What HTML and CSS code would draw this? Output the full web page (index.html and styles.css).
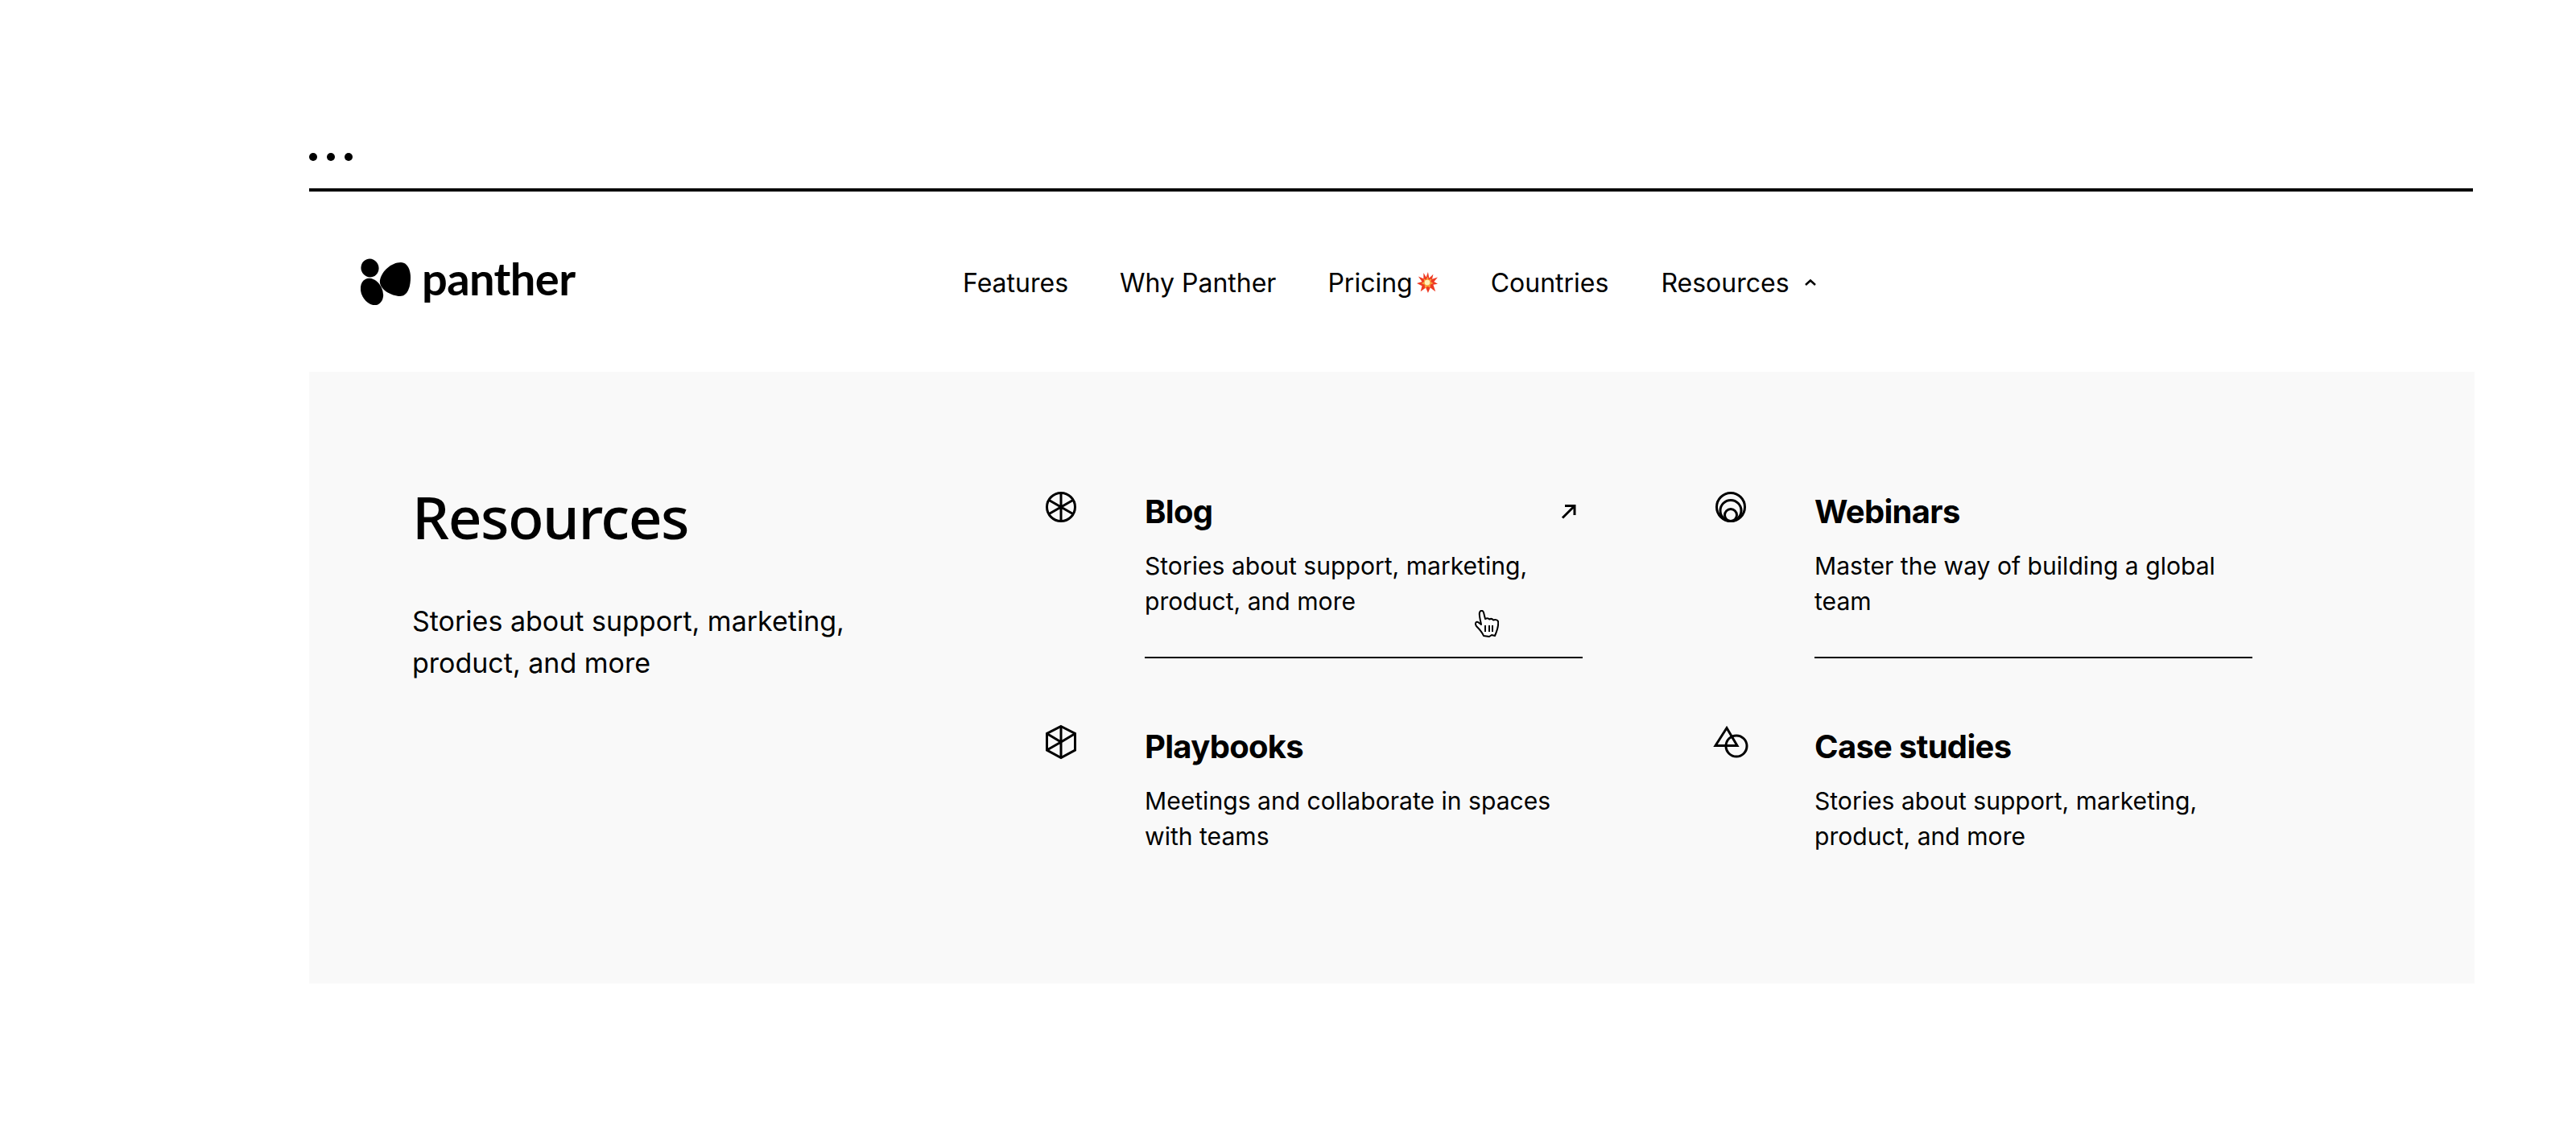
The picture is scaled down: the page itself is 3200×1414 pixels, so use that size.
FILE: index.html
```html
<!DOCTYPE html>
<html lang="en">
<head>
    <meta charset="utf-8">
    <title>Panther - Resources menu</title>
    <link rel="stylesheet" href="styles.css">
</head>
<body>

    <div class="frame">
        <div class="dots"><span></span><span></span><span></span></div>

        <header class="navbar">
            <a class="logo" href="#">
                <svg class="logo-mark" viewBox="0 0 64 58" width="64" height="58">
                    <ellipse cx="11.500" cy="12" rx="11" ry="11.500" transform="rotate(-20 11.500 12)"/>
                    <ellipse cx="14" cy="41.500" rx="13" ry="17.500" transform="rotate(-28 14 41.500)"/>
                    <path d="M24 27C26 16 38 5 50 5C58 5 62 14 62 24C62 36 58 47 49 47C38 47 22 38 24 27Z"/>
                </svg>
                <span class="logo-text">panther</span>
            </a>
            <nav class="nav">
                <a href="#">Features</a>
                <a href="#">Why Panther</a>
                <a href="#" class="nav-pricing">Pricing
                    <svg viewBox="0 0 28 28" width="26" height="26">
                        <polygon fill="#ee3a22" points="15,0 16.500,8 22,3 20.500,9.500 28,7 23,13 28,16 22,17 25,26 18,21 15,28 12,21 5,26 7,18.500 0,15 7,13 2,6 9,9 9,1 12.500,7"/>
                        <polygon fill="#f9a03a" points="14.500,6 16,10.500 20,9 18.500,13 22,15 18,17 18,21 14.500,19 11,22 10.500,17 6,15 10,13 9,9 12.500,10.500"/>
                        <circle cx="14" cy="14" r="3.500" fill="#fff2b8"/>
                    </svg>
                </a>
                <a href="#">Countries</a>
                <a href="#" class="nav-open">Resources
                    <svg viewBox="0 0 16 10" width="16" height="10"><path d="M2 8L8 2.500L14 8" fill="none" stroke="#000" stroke-width="2.500"/></svg>
                </a>
            </nav>
        </header>

        <section class="panel">
            <div class="intro">
                <h1>Resources</h1>
                <p>Stories about support, marketing, product, and more</p>
            </div>

            <div class="cards">
                <a class="card card-line" href="#">
                    <svg class="icon" viewBox="0 0 40 44">
                        <circle cx="20" cy="20" r="17.500"/>
                        <path d="M20 2.500V37.500M4.800 11.200L35.200 28.800M4.800 28.800L35.200 11.200"/>
                    </svg>
                    <div class="card-body">
                        <h3>Blog</h3>
                        <p>Stories about support, marketing, product, and more</p>
                        <svg class="arrow" viewBox="0 0 20 20"><path d="M3 17.500L18 2.500M6 2.500H18V14"/></svg>
                        <svg class="cursor" viewBox="0 0 30 34" width="30" height="34">
                            <path fill="#fff" stroke="#000" stroke-width="2" stroke-linejoin="round" d="M6 3C7 0 10 0 11 3L13 11C15 10 17 10 18 11.500C20 10.500 22 11 23 12.500C25 11.500 28 12 29 14C30 20 28 25 25 32L21 31L18 33L11 32C9 27 5 23 2 20C0 17 1 14 4 15L8 18C7 12 5 7 6 3Z"/>
                            <path fill="none" stroke="#000" stroke-width="2" d="M13 19V27M18 19V27M22 19V27"/>
                        </svg>
                    </div>
                </a>
                <a class="card card-line" href="#">
                    <svg class="icon" viewBox="0 0 40 44">
                        <circle cx="20" cy="20" r="17.500"/>
                        <circle cx="20" cy="24.500" r="13"/>
                        <circle cx="20" cy="30" r="7.500"/>
                    </svg>
                    <div class="card-body">
                        <h3>Webinars</h3>
                        <p>Master the way of building a global team</p>
                    </div>
                </a>
                <a class="card" href="#">
                    <svg class="icon" viewBox="0 0 40 44">
                        <path d="M20 0.500L37.500 9.500V30L20 39.500L2.500 30V9.500Z"/>
                        <path d="M20 0.500V39.500M2.500 9.500L20 20L37.500 9.500M2.500 30L20 20"/>
                    </svg>
                    <div class="card-body">
                        <h3>Playbooks</h3>
                        <p>Meetings and collaborate in spaces with teams</p>
                    </div>
                </a>
                <a class="card" href="#">
                    <svg class="icon" viewBox="0 0 40 44">
                        <path d="M15 2.500L28 24.500H1Z"/>
                        <circle cx="27" cy="25" r="13"/>
                    </svg>
                    <div class="card-body">
                        <h3>Case studies</h3>
                        <p>Stories about support, marketing, product, and more</p>
                    </div>
                </a>
            </div>
        </section>
    </div>

</body>
</html>
```

FILE: styles.css
```css
* {
    margin: 0;
    padding: 0;
    box-sizing: border-box;
}

body {
    font-family: 'Inter', sans-serif;
    background-color: #ffffff;
    color: #000;
}

a {
    color: inherit;
    text-decoration: none;
}

.frame {
    width: 2690px;
    margin-left: 384px;
    padding-top: 190px;
}

.dots {
    display: flex;
    gap: 12px;
    padding-bottom: 34px;
    margin-right: 2px;
    border-bottom: 4px solid #000;
}

.dots span {
    width: 10px;
    height: 10px;
    border-radius: 50%;
    background: #000;
}

.navbar {
    height: 224px;
    display: flex;
    align-items: center;
    padding-left: 64px;
}

.logo {
    display: flex;
    align-items: center;
    gap: 12px;
    width: 267px;
}

.logo-text {
    font-family: 'Lato', sans-serif;
    font-size: 56px;
    font-weight: 700;
    letter-spacing: -0.6px;
    line-height: 58px;
    padding-bottom: 8px;
}

.nav {
    display: flex;
    align-items: center;
    gap: 64px;
    margin-left: 481px;
    padding-top: 2px;
    font-size: 32px;
}

.nav a {
    display: flex;
    align-items: center;
}

.nav-pricing {
    gap: 5px;
    padding-right: 2px;
}

.nav-open {
    gap: 18px;
    margin-left: 1px;
}

.panel {
    height: 760px;
    background-color: #f9f9f9;
    display: flex;
    padding: 150px 0 0 128px;
}

.intro {
    width: 786px;
}

.intro h1 {
    font-family: 'Noto Sans', sans-serif;
    font-size: 73px;
    font-weight: 500;
    line-height: 76px;
    letter-spacing: -1.5px;
    margin-top: -8px;
    margin-bottom: 66px;
}

.intro p {
    font-size: 34px;
    line-height: 52px;
    width: 560px;
}

.cards {
    display: grid;
    grid-template-columns: 668px 668px;
    column-gap: 164px;
    row-gap: 86px;
    align-content: start;
}

.card {
    display: flex;
}

.icon {
    width: 40px;
    height: 44px;
    margin-top: -2px;
    margin-right: 84px;
    flex-shrink: 0;
    overflow: visible;
    fill: none;
    stroke: #000;
    stroke-width: 3;
}

.card-body {
    position: relative;
    width: 544px;
}

.card-line .card-body {
    border-bottom: 2px solid #000;
    padding-bottom: 47px;
}

.card h3 {
    font-size: 40px;
    font-weight: 700;
    line-height: 48px;
    letter-spacing: -0.7px;
    margin-bottom: 22px;
}

.card p {
    font-size: 30.100px;
    line-height: 43.500px;
}

.arrow {
    position: absolute;
    top: 14px;
    right: 8px;
    width: 20px;
    height: 20px;
    fill: none;
    stroke: #000;
    stroke-width: 3;
}

.cursor {
    position: absolute;
    left: 410px;
    top: 146px;
}
```
